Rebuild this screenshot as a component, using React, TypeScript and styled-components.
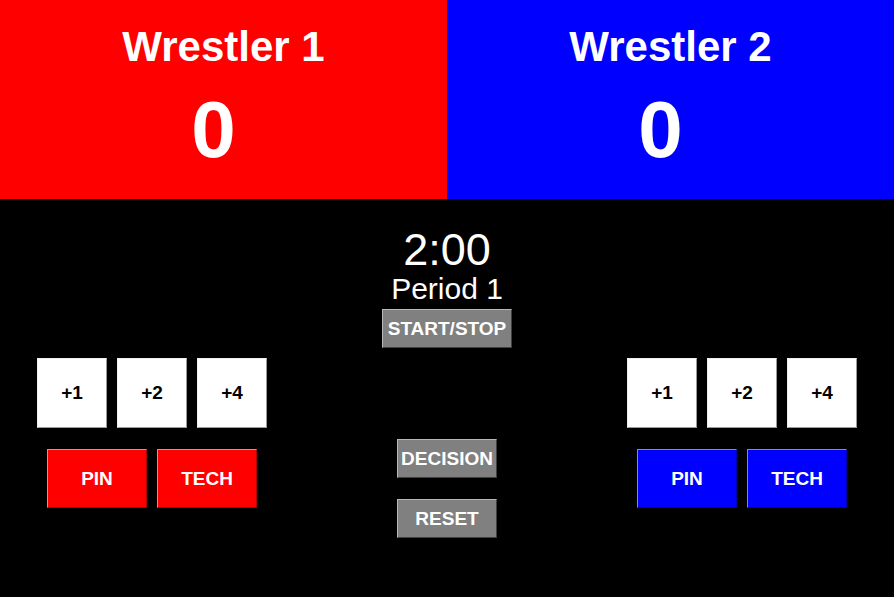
import React from "react";
import styled, { createGlobalStyle } from "styled-components";

const GlobalStyle = createGlobalStyle`
  html, body {
    margin: 0;
    padding: 0;
    background: #000;
    font-family: "Liberation Sans", Arial, sans-serif;
  }
  #root {
    min-height: 597px;
    background: #000;
  }
`;

const Page = styled.div`
  width: 894px;
  height: 597px;
  background: #000;
  display: flex;
  flex-direction: column;
  overflow: hidden;
`;

const Header = styled.div`
  display: flex;
  height: 199px;
`;

const Panel = styled.div<{ $bg: string }>`
  flex: 1;
  background: ${(p) => p.$bg};
  color: #fff;
  display: flex;
  flex-direction: column;
  align-items: center;
  padding-top: 23px;
  box-sizing: border-box;
`;

const Name = styled.div`
  font-size: 42px;
  font-weight: bold;
  line-height: 48px;
`;

const Score = styled.div`
  font-size: 80px;
  font-weight: bold;
  line-height: 80px;
  margin-top: 19px;
  padding-right: 20px;
`;

const ClockSection = styled.div`
  display: flex;
  flex-direction: column;
  align-items: center;
  color: #fff;
  padding-top: 28px;
`;

const Timer = styled.div`
  font-size: 45px;
  line-height: 45px;
`;

const Period = styled.div`
  font-size: 30px;
  line-height: 34px;
`;

const BaseButton = styled.button`
  box-sizing: border-box;
  font-family: "Liberation Sans", Arial, sans-serif;
  font-weight: bold;
  font-size: 19px;
  padding: 0;
  margin: 0;
  display: flex;
  align-items: center;
  justify-content: center;
  cursor: pointer;
  border-style: solid;
  border-width: 1px;
`;

const GrayButton = styled(BaseButton)<{ $w: number }>`
  width: ${(p) => p.$w}px;
  height: 39px;
  background: #808080;
  color: #fff;
  border-color: #b8b8b8 #404040 #404040 #b8b8b8;
`;

const StartStop = styled(GrayButton)`
  margin-top: 3px;
`;

const ControlsRow = styled.div`
  display: flex;
  justify-content: space-between;
  align-items: flex-start;
  padding: 0 37px;
  margin-top: 10px;
`;

const SideGroup = styled.div`
  width: 230px;
  display: flex;
  flex-direction: column;
  align-items: center;
  gap: 21px;
`;

const ButtonRow = styled.div`
  display: flex;
  gap: 10px;
`;

const PointButton = styled(BaseButton)`
  width: 70px;
  height: 70px;
  background: #fff;
  color: #000;
  border-color: #f0f0f0 #9a9a9a #9a9a9a #f0f0f0;
`;

const WinButton = styled(BaseButton)<{ $bg: string; $light: string; $dark: string }>`
  width: 100px;
  height: 59px;
  background: ${(p) => p.$bg};
  color: #fff;
  border-color: ${(p) => `${p.$light} ${p.$dark} ${p.$dark} ${p.$light}`};
`;

const CenterGroup = styled.div`
  display: flex;
  flex-direction: column;
  align-items: center;
  gap: 21px;
  padding-top: 81px;
`;

type Side = { bg: string; light: string; dark: string };

const sides: Side[] = [
  { bg: "#ff0000", light: "#ff8080", dark: "#b00000" },
  { bg: "#0000ff", light: "#8080ff", dark: "#0000b0" },
];

const Controls: React.FC<{ side: Side }> = ({ side }) => (
  <SideGroup>
    <ButtonRow>
      <PointButton>+1</PointButton>
      <PointButton>+2</PointButton>
      <PointButton>+4</PointButton>
    </ButtonRow>
    <ButtonRow>
      <WinButton $bg={side.bg} $light={side.light} $dark={side.dark}>
        PIN
      </WinButton>
      <WinButton $bg={side.bg} $light={side.light} $dark={side.dark}>
        TECH
      </WinButton>
    </ButtonRow>
  </SideGroup>
);

export default function App() {
  return (
    <>
      <GlobalStyle />
      <Page>
        <Header>
          <Panel $bg="#ff0000">
            <Name>Wrestler 1</Name>
            <Score>0</Score>
          </Panel>
          <Panel $bg="#0000ff">
            <Name>Wrestler 2</Name>
            <Score>0</Score>
          </Panel>
        </Header>
        <ClockSection>
          <Timer>2:00</Timer>
          <Period>Period 1</Period>
          <StartStop $w={130}>START/STOP</StartStop>
        </ClockSection>
        <ControlsRow>
          <Controls side={sides[0]} />
          <CenterGroup>
            <GrayButton $w={100}>DECISION</GrayButton>
            <GrayButton $w={100}>RESET</GrayButton>
          </CenterGroup>
          <Controls side={sides[1]} />
        </ControlsRow>
      </Page>
    </>
  );
}
